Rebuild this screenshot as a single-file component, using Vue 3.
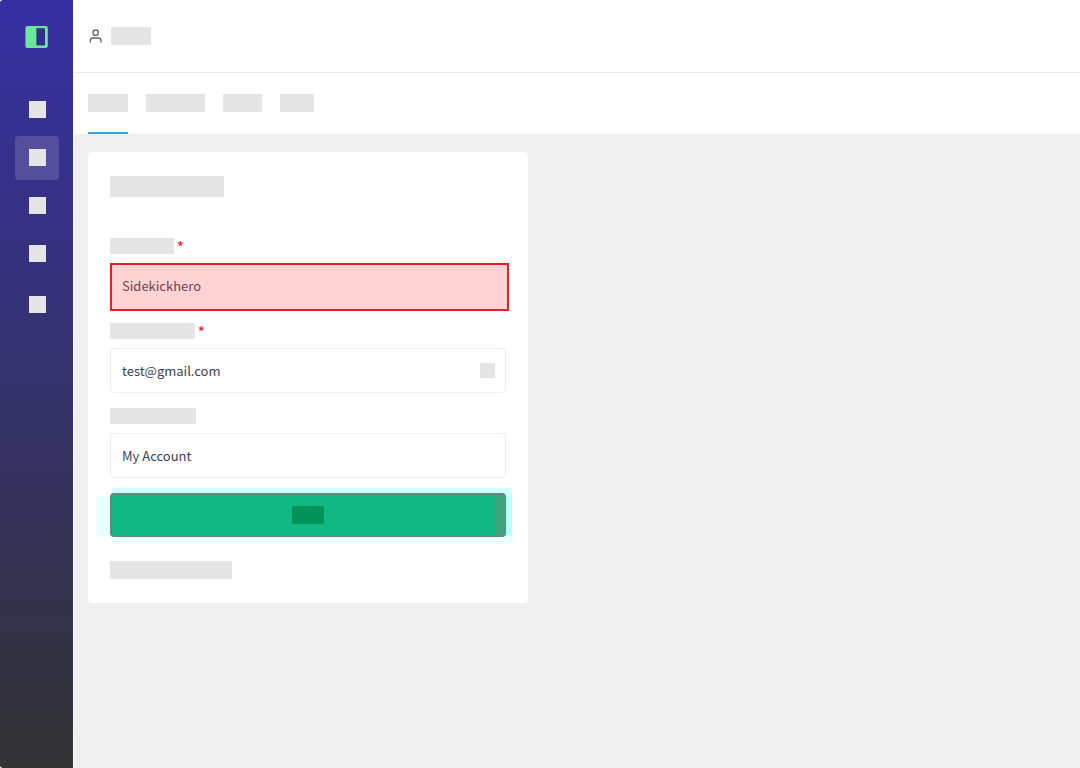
<template>
  <div class="app">
    <aside class="sidebar">
      <a href="#" class="logo" aria-label="Home">
        <svg width="24" height="24" viewBox="0 0 24 24">
          <rect x="0.4" y="1" width="22.4" height="22" rx="2" fill="#68e898" />
          <rect x="11.4" y="3.2" width="8.6" height="17.2" fill="#342c8c" />
        </svg>
      </a>
      <nav class="menu">
        <a
          v-for="item in menu"
          :key="item.id"
          href="#"
          class="menu-item"
          :class="{ active: item.id === activeMenu, last: item.last }"
          :aria-label="item.id"
          @click.prevent="activeMenu = item.id"
        ><span class="menu-icon"></span></a>
      </nav>
    </aside>

    <div class="main">
      <header class="topbar">
        <svg class="user-icon" width="16" height="16" viewBox="0 0 24 24" fill="none" stroke="#666" stroke-width="2" stroke-linecap="round" stroke-linejoin="round">
          <path d="M19.5 21v-2a4 4 0 0 0-4-4h-8a4 4 0 0 0-4 4v2" />
          <circle cx="11.5" cy="7" r="4" />
        </svg>
        <span class="block user-name"></span>
      </header>

      <nav class="tabs">
        <button
          v-for="tab in tabs"
          :key="tab.id"
          type="button"
          class="tab"
          :class="{ active: tab.id === activeTab }"
          :aria-label="tab.id"
          @click="activeTab = tab.id"
        ><span class="block" :style="{ width: tab.width + 'px' }"></span></button>
      </nav>

      <form class="card" @submit.prevent="submitForm">
        <div class="card-header">
          <span class="block title"></span>
        </div>

        <div v-for="field in fields" :key="field.id" class="form-group">
          <label :for="field.id">
            <span class="block label-block" :style="{ width: field.width + 'px' }"></span>
            <span v-if="field.required" class="required">*</span>
          </label>
          <div class="control" :class="{ invalid: field.invalid }">
            <input :id="field.id" v-model="formData[field.id]" :type="field.type" :required="field.required">
            <span v-if="field.icon" class="control-icon"></span>
          </div>
        </div>

        <div class="submit-wrap">
          <span class="halo halo-top"></span>
          <span class="halo halo-left"></span>
          <span class="halo halo-right"></span>
          <span class="halo halo-bottom"></span>
          <button type="submit" class="submit" aria-label="save"><span class="submit-text"></span></button>
        </div>

        <a href="#" class="footer-link" aria-label="more"><span class="block link-block"></span></a>
      </form>
    </div>
  </div>
</template>

<script setup>
import { ref } from 'vue';

const menu = [
  { id: 'dashboard' },
  { id: 'account' },
  { id: 'projects' },
  { id: 'reports' },
  { id: 'settings', last: true },
];

const tabs = [
  { id: 'profile', width: 40 },
  { id: 'notifications', width: 59 },
  { id: 'security', width: 39 },
  { id: 'billing', width: 34 },
];

const fields = [
  { id: 'username', type: 'text', width: 64, required: true, invalid: true },
  { id: 'email', type: 'email', width: 85, required: true, icon: true },
  { id: 'account', type: 'text', width: 86 },
];

const activeMenu = ref('account');
const activeTab = ref('profile');

const formData = ref({
  username: 'Sidekickhero',
  email: 'test@gmail.com',
  account: 'My Account',
});

const emit = defineEmits(['submit']);

const submitForm = () => {
  emit('submit', { ...formData.value });
};
</script>

<style>
body { margin: 0; background: #fff; }
</style>

<style scoped>
* { box-sizing: border-box; }
.app {
  display: flex;
  min-height: 100vh;
  border-radius: 3px;
  overflow: hidden;
  font-family: "Noto Sans CJK SC", "Noto Sans", sans-serif;
}
.block { display: block; height: 18px; background: #e5e5e5; }

.sidebar {
  width: 73px;
  flex-shrink: 0;
  display: flex;
  flex-direction: column;
  align-items: center;
  background: linear-gradient(#3730a3, #333);
}
.logo { display: flex; padding: 25px 0 39px; }
.menu { display: flex; flex-direction: column; gap: 4px; }
.menu-item {
  display: flex;
  align-items: center;
  justify-content: center;
  width: 44px;
  height: 44px;
  padding: 0 0 1px 2px;
  border-radius: 4px;
}
.menu-item.active { background: #554e9c; }
.menu-item.last { margin-top: 3px; }
.menu-icon { width: 17px; height: 17px; background: #e5e5e5; }

.main { flex: 1; min-width: 0; background: #f0f0f0; border-left: 1px solid #fff; }
.topbar {
  display: flex;
  align-items: center;
  gap: 7px;
  height: 73px;
  padding: 0 14px;
  background: #fff;
  border-bottom: 1px solid #e9e9e9;
}
.user-name { width: 40px; }
.tabs {
  display: flex;
  gap: 18px;
  height: 61px;
  padding: 0 14px;
  background: #fff;
}
.tab {
  display: flex;
  align-items: center;
  padding: 0;
  border: none;
  border-bottom: 2px solid transparent;
  background: none;
  cursor: pointer;
}
.tab.active { border-bottom-color: #28a9dc; }

.card {
  max-width: 440px;
  margin: 18px 14px;
  padding: 24px 22px;
  background: #fff;
  border-radius: 4px;
}
.card-header { padding-bottom: 18px; margin-bottom: 22px; border-bottom: 1px solid #fcfcfc; }
.title { width: 114px; height: 21px; }

.form-group { margin-bottom: 15px; }
label { display: flex; gap: 3px; height: 16px; margin-bottom: 9px; }
.label-block { height: 16px; }
.required { color: #e53040; font-size: 13px; line-height: 16px; font-weight: 700; }
.control { position: relative; height: 45px; }
input {
  display: block;
  width: 100%;
  height: 100%;
  padding: 0 11px;
  border: 1px solid #f0f0f0;
  border-radius: 4px;
  background: #fff;
  color: #3a4156;
  font-family: inherit;
  font-size: 13px;
  outline: none;
}
.control.invalid { height: 48px; margin-right: -3px; margin-bottom: -3px; }
.control.invalid input {
  padding: 0 10px 4px;
  border: 2px solid #ee1c25;
  border-radius: 0;
  background: #ffd3d3;
  color: #713f50;
}
.control-icon {
  position: absolute;
  top: 15px;
  right: 11px;
  width: 15px;
  height: 15px;
  background: #e5e5e5;
}

.submit-wrap { position: relative; height: 44px; }
.submit {
  position: relative;
  display: flex;
  align-items: center;
  justify-content: center;
  width: 100%;
  height: 100%;
  padding: 0 2px 2px 0;
  border: solid #5f8a79;
  border-width: 2px 1px 1px 2px;
  border-radius: 4px;
  background: linear-gradient(to right, #12b881 calc(100% - 9px), #41a27f calc(100% - 9px));
  cursor: pointer;
}
.submit-text { width: 32px; height: 18px; background: #00945a; }
/* glow strips around the button */
.halo { position: absolute; background: #ebffff; }
.halo-top { top: -5px; left: 2px; right: -6px; height: 8px; background: #d2ffff; }
.halo-left { top: 3px; left: -14px; width: 14px; bottom: 1px; }
.halo-right { top: 3px; right: -6px; width: 10px; bottom: 1px; background: #b9ffff; }
.halo-bottom { bottom: -7px; left: 2px; right: -6px; height: 8px; }

.footer-link { display: block; width: fit-content; margin-top: 24px; }
.link-block { width: 122px; }
</style>
